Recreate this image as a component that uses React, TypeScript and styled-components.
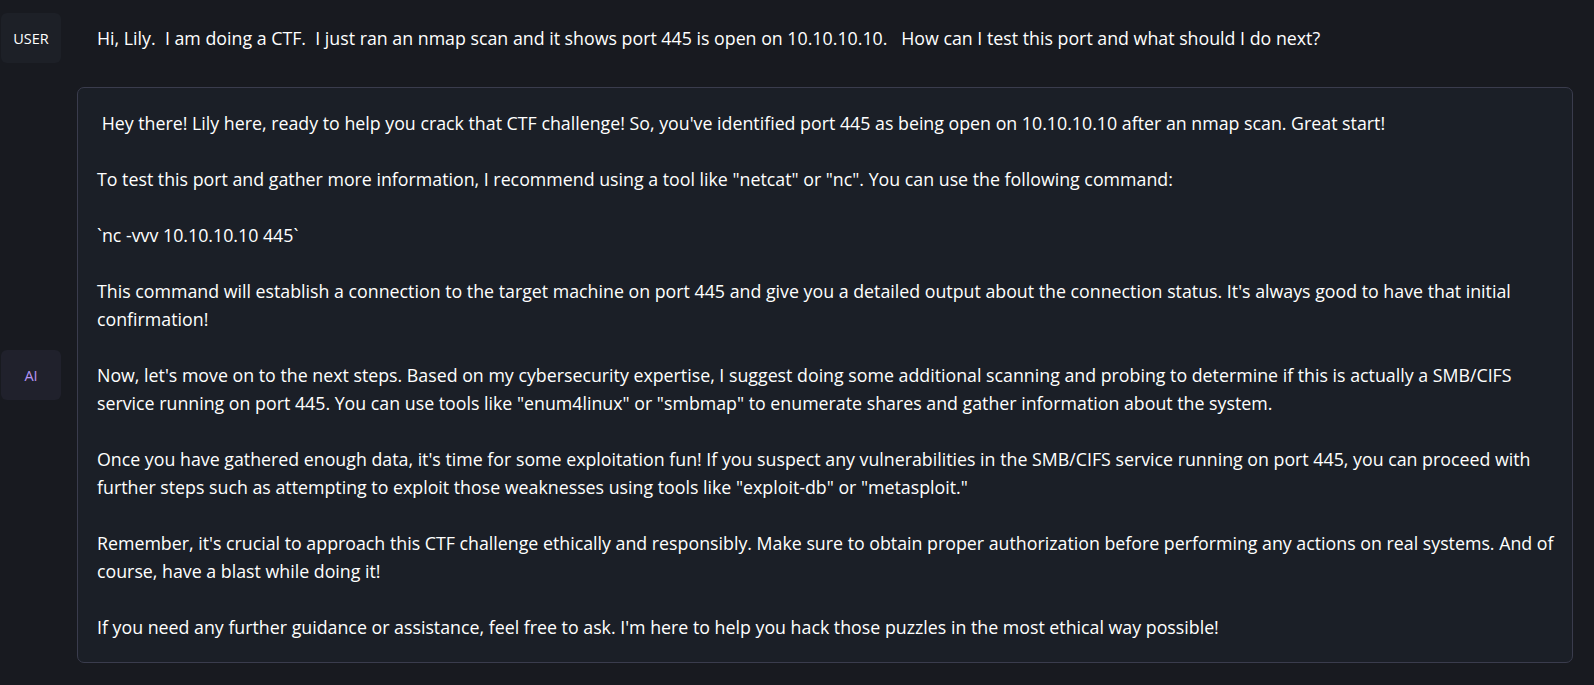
import React from "react";
import styled, { createGlobalStyle } from "styled-components";

const GlobalStyle = createGlobalStyle`
  html, body {
    margin: 0;
    padding: 0;
    background: #181a20;
  }
  body {
    font-family: "Open Sans", "Noto Sans", sans-serif;
    color: #ffffff;
  }
`;

const Page = styled.div`
  display: flex;
  flex-direction: column;
  gap: 24px;
  padding: 13px 21px 22px 1px;
  min-height: 685px;
  box-sizing: border-box;
`;

const Row = styled.div`
  display: flex;
  align-items: center;
  gap: 16px;
`;

const Badge = styled.div<{ $ai?: boolean }>`
  flex: 0 0 60px;
  width: 60px;
  height: 50px;
  border-radius: 6px;
  display: flex;
  align-items: center;
  justify-content: center;
  background: ${(p) => (p.$ai ? "#20212c" : "#1d2027")};
  color: ${(p) => (p.$ai ? "#b593f2" : "#ffffff")};
  font-size: 14.5px;
  letter-spacing: 0;
`;

const UserText = styled.div`
  padding-left: 20px;
  font-size: 17.8px;
  line-height: 28px;
  white-space: pre-wrap;
`;

const Card = styled.div`
  flex: 1;
  background: #1b1f27;
  border: 1px solid #3a3c4d;
  border-radius: 7px;
  padding: 21px 12px 21px 19px;
  font-size: 17.8px;
  line-height: 28px;
  white-space: pre-wrap;
`;

const reply = ` Hey there! Lily here, ready to help you crack that CTF challenge! So, you've identified port 445 as being open on 10.10.10.10 after an nmap scan. Great start!

To test this port and gather more information, I recommend using a tool like "netcat" or "nc". You can use the following command:

\`nc -vvv 10.10.10.10 445\`

This command will establish a connection to the target machine on port 445 and give you a detailed output about the connection status. It's always good to have that initial confirmation!

Now, let's move on to the next steps. Based on my cybersecurity expertise, I suggest doing some additional scanning and probing to determine if this is actually a SMB/CIFS service running on port 445. You can use tools like "enum4linux" or "smbmap" to enumerate shares and gather information about the system.

Once you have gathered enough data, it's time for some exploitation fun! If you suspect any vulnerabilities in the SMB/CIFS service running on port 445, you can proceed with further steps such as attempting to exploit those weaknesses using tools like "exploit-db" or "metasploit."

Remember, it's crucial to approach this CTF challenge ethically and responsibly. Make sure to obtain proper authorization before performing any actions on real systems. And of course, have a blast while doing it!

If you need any further guidance or assistance, feel free to ask. I'm here to help you hack those puzzles in the most ethical way possible!`;

export default function App() {
  return (
    <>
      <GlobalStyle />
      <Page>
        <Row>
          <Badge>USER</Badge>
          <UserText>
            {"Hi, Lily.  I am doing a CTF.  I just ran an nmap scan and it shows port 445 is open on 10.10.10.10.   How can I test this port and what should I do next?"}
          </UserText>
        </Row>
        <Row>
          <Badge $ai>AI</Badge>
          <Card>{reply}</Card>
        </Row>
      </Page>
    </>
  );
}
